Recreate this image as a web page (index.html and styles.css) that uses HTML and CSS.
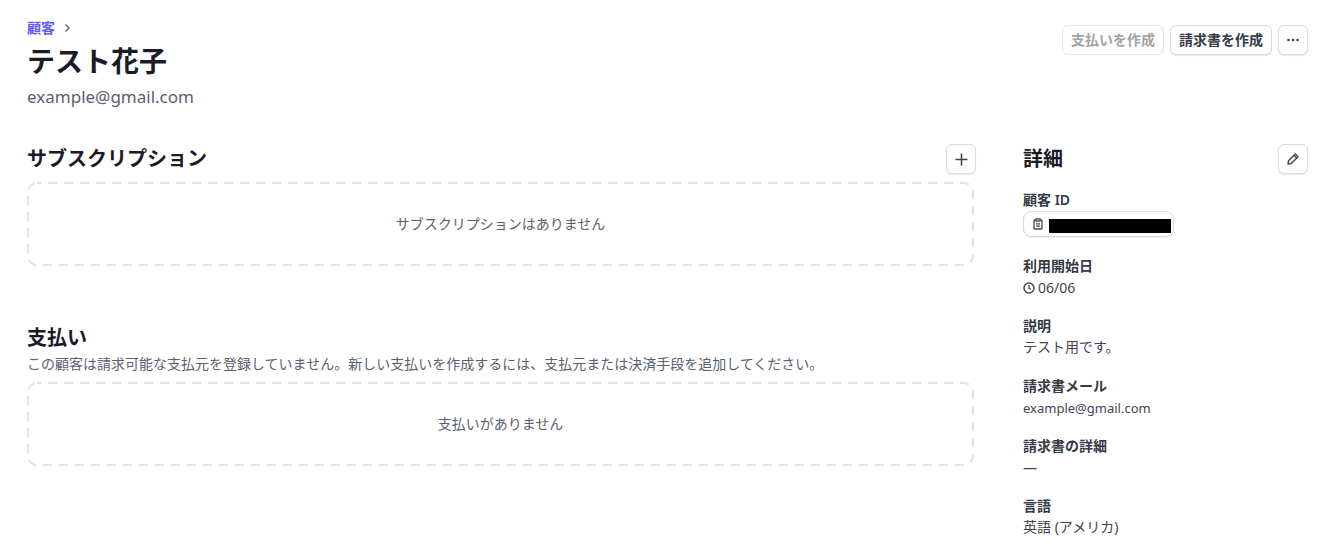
FILE: index.html
```html
<!DOCTYPE html>
<html lang="ja">
<head>
<meta charset="utf-8">
<title>テスト花子</title>
<link rel="stylesheet" href="styles.css">
</head>
<body>
<div class="page">
  <header class="top">
    <div class="who">
      <nav class="crumb"><a class="crumb-link">顧客</a>
        <svg class="chev" width="12" height="12" viewBox="0 0 12 12"><path d="M4.500 2.500 8 6l-3.500 3.500" fill="none" stroke="#6a7383" stroke-width="1.600"/></svg>
      </nav>
      <h1 class="name">テスト花子</h1>
      <p class="mail">example@gmail.com</p>
    </div>
    <div class="actions">
      <button class="btn btn-off">支払いを作成</button>
      <button class="btn">請求書を作成</button>
      <button class="btn btn-icon">
        <svg width="14" height="12" viewBox="0 0 14 12"><circle cx="2.500" cy="6" r="1.300" fill="#414552"/><circle cx="7" cy="6" r="1.300" fill="#414552"/><circle cx="11.500" cy="6" r="1.300" fill="#414552"/></svg>
      </button>
    </div>
  </header>
  <div class="cols">
    <main class="left">
      <section class="sec sec-sub">
        <div class="sec-head">
          <h2 class="sec-title">サブスクリプション</h2>
          <button class="btn btn-icon btn-plus">
            <svg width="13" height="13" viewBox="0 0 13 13"><path d="M6.500 .5v12M.5 6.500h12" stroke="#414552" stroke-width="1.600" fill="none"/></svg>
          </button>
        </div>
        <div class="empty">
          <svg class="dash" width="947" height="84" viewBox="0 0 947 84"><rect x="1" y="1" width="945" height="82" rx="9" fill="none" stroke="#e0e4e9" stroke-width="2" stroke-dasharray="9 7" stroke-dashoffset="5"/></svg>
          サブスクリプションはありません
        </div>
      </section>
      <section class="sec sec-pay">
        <h2 class="sec-title">支払い</h2>
        <p class="sec-desc">この顧客は請求可能な支払元を登録していません。新しい支払いを作成するには、支払元または決済手段を追加してください。</p>
        <div class="empty">
          <svg class="dash" width="947" height="84" viewBox="0 0 947 84"><rect x="1" y="1" width="945" height="82" rx="9" fill="none" stroke="#e0e4e9" stroke-width="2" stroke-dasharray="9 7" stroke-dashoffset="5"/></svg>
          支払いがありません
        </div>
      </section>
    </main>
    <aside class="right">
      <div class="sec-head side-head">
        <h2 class="sec-title">詳細</h2>
        <button class="btn btn-icon">
          <svg width="12" height="12" viewBox="0 0 12 12"><path d="M8.300 1 11 3.700 4.200 10.500 1 11 1.500 7.800Z M7 2.500 9.500 5" fill="none" stroke="#414552" stroke-width="1.400" stroke-linejoin="round"/></svg>
        </button>
      </div>
      <dl class="facts">
        <div class="fact">
          <dt>顧客 ID</dt>
          <dd class="copy-row"><span class="copy">
            <svg width="12" height="12" viewBox="0 0 12 12"><path d="M4 2H2.800a.8.800 0 0 0-.8.800v7.400a.8.800 0 0 0 .8.800h6.400a.8.800 0 0 0 .8-.8V2.800a.8.800 0 0 0-.8-.8H8M4 .8h4v2.400H4ZM4 5.800h4M4 8.200h4" fill="none" stroke="#414552" stroke-width="1.300"/></svg>
            <span class="redact"></span></span></dd>
        </div>
        <div class="fact">
          <dt>利用開始日</dt>
          <dd class="date">
            <svg class="clock" width="12" height="12" viewBox="0 0 12 12"><circle cx="6" cy="6" r="5" fill="none" stroke="#414552" stroke-width="1.400"/><path d="M6 3v3.200l2 1.300" fill="none" stroke="#414552" stroke-width="1.300"/></svg>
            06/06</dd>
        </div>
        <div class="fact"><dt>説明</dt><dd>テスト用です。</dd></div>
        <div class="fact"><dt>請求書メール</dt><dd class="small">example@gmail.com</dd></div>
        <div class="fact"><dt>請求書の詳細</dt><dd class="low">—</dd></div>
        <div class="fact"><dt>言語</dt><dd>英語 (アメリカ)</dd></div>
      </dl>
    </aside>
  </div>
</div>
</body>
</html>
```
FILE: styles.css
```css
* { box-sizing: border-box; }
html, body { margin: 0; height: 100%; overflow: hidden; background: #fff; }
body {
  font-family: "Noto Sans", "Noto Sans CJK JP", sans-serif;
  color: #414552;
  font-size: 14px;
}
.page { padding: 18px 21px 0 27px; }
.top { display: flex; justify-content: space-between; align-items: flex-start; }
.crumb { display: flex; align-items: center; gap: 6px; height: 20px; }
.crumb-link { color: #635bff; font-size: 14px; font-weight: 600; line-height: 20px; }
.name { margin: 5px 0 0; font-size: 28px; line-height: 36px; font-weight: 700; color: #1a1b25; }
.mail { margin: 6px 0 0; font-size: 17px; line-height: 24px; color: #596171; }
.actions { display: flex; gap: 6px; margin-top: 7px; }
.btn {
  height: 30px; padding: 0 8px;
  font: 600 14px/18px "Noto Sans", "Noto Sans CJK JP", sans-serif;
  color: #353a44; background: #fff;
  border: 1px solid #d5dbe1; border-radius: 6px;
  box-shadow: 0 1px 1px rgba(60, 66, 87, .12);
}
.btn-off { color: #a3a3a3; border-color: #e3e6ea; box-shadow: none; }
.btn-icon { width: 30px; height: 30px; padding: 0; display: flex; align-items: center; justify-content: center; }
.cols { display: flex; gap: 47px; margin-top: 35px; }
.left { width: 949px; }
.right { width: 285px; }
.sec-head { display: flex; justify-content: space-between; align-items: center; height: 30px; }
.sec-title { margin: 0; font-size: 20px; line-height: 28px; font-weight: 700; color: #1a1b25; }
.sec-sub .empty { margin-top: 8px; }
.sec-pay { margin-top: 58px; }
.sec-desc { margin: 2px 0 0; line-height: 20px; color: #596171; font-size: 14px; }
.sec-pay .empty { margin-top: 8px; }
.empty {
  position: relative;
  width: 947px; height: 84px; padding-bottom: 2px;
  display: flex; align-items: center; justify-content: center;
  color: #596171; font-size: 14px;
}
.dash { position: absolute; left: 0; top: 0; }
.facts { margin: 16px 0 0; display: flex; flex-direction: column; gap: 19px; }
.fact dt { font-weight: 600; font-size: 14px; line-height: 20px; color: #353a44; }
.fact dd { margin: 1px 0 0; font-size: 14px; line-height: 20px; height: 20px; color: #414552; }
.fact .small { font-size: 13px; line-height: 22px; }
.fact .low { line-height: 22px; }
.fact .copy-row { height: 26px; }
.copy {
  display: flex; align-items: center; gap: 5px; width: 151px; height: 26px; padding-left: 8px;
  border: 1px solid #d5dbe1; border-radius: 8px; box-shadow: 0 1px 1px rgba(60, 66, 87, .1);
}
.redact { align-self: flex-end; margin-bottom: 3px; width: 122px; height: 14px; background: #000; }
.fact .date { display: flex; align-items: center; gap: 3px; line-height: 22px; height: 22px; margin-bottom: -2px; }
```
